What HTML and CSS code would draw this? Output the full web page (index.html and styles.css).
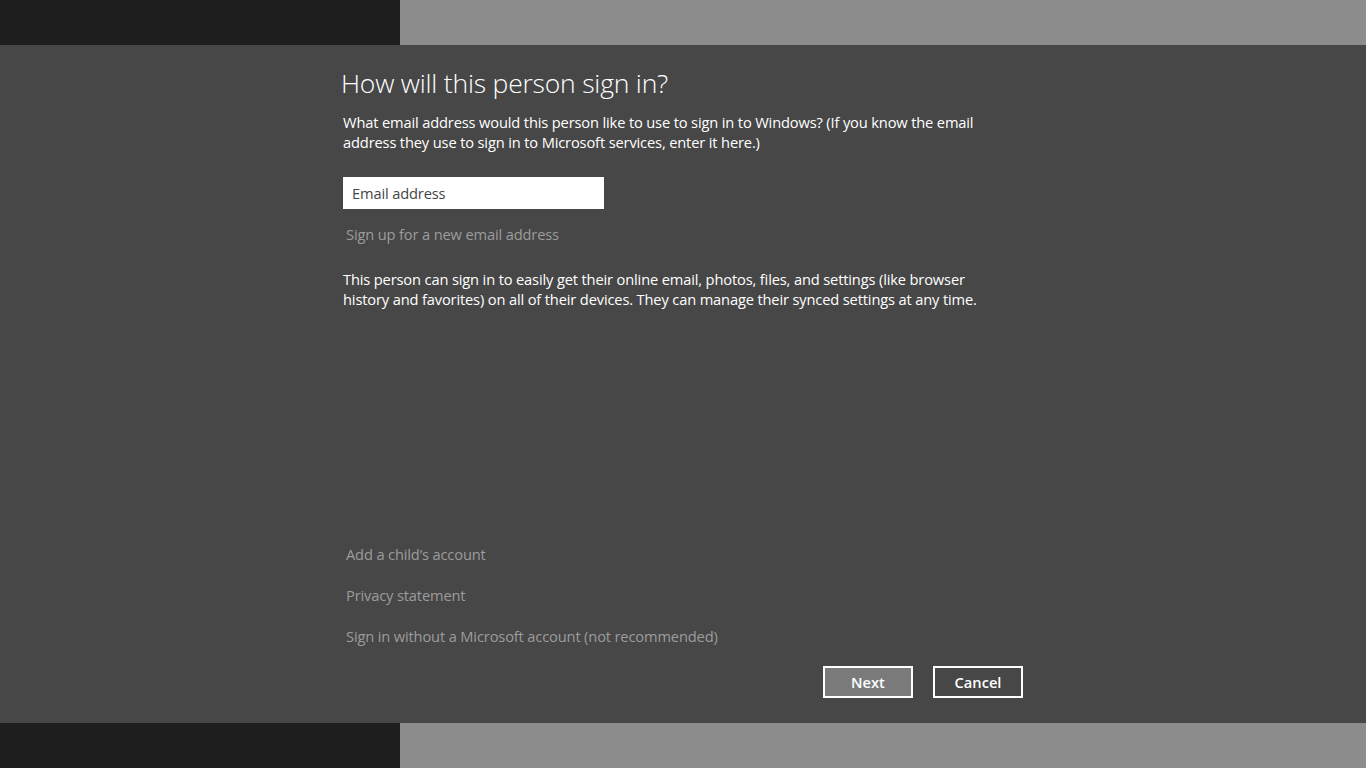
FILE: index.html
```html
<!DOCTYPE html>
<html lang="en">
<head>
<meta charset="utf-8">
<title>How will this person sign in?</title>
<link rel="stylesheet" href="styles.css">
</head>
<body>
<div class="band">
  <div class="band-left"></div>
  <div class="band-right"></div>
</div>
<main class="dialog">
  <h1 class="title">How will this person sign in?</h1>
  <p class="text">What email address would this person like to use to sign in to Windows? (If you know the email<br>address they use to sign in to Microsoft services, enter it here.)</p>
  <input class="email" type="text" placeholder="Email address">
  <a class="link signup">Sign up for a new email address</a>
  <p class="text info">This person can sign in to easily get their online email, photos, files, and settings (like browser<br>history and favorites) on all of their devices. They can manage their synced settings at any time.</p>
  <div class="links">
    <a class="link">Add a child’s account</a>
    <a class="link">Privacy statement</a>
    <a class="link">Sign in without a Microsoft account (not recommended)</a>
  </div>
  <div class="buttons">
    <button class="btn btn-primary">Next</button>
    <button class="btn">Cancel</button>
  </div>
</main>
<div class="band">
  <div class="band-left"></div>
  <div class="band-right"></div>
</div>
</body>
</html>
```
FILE: styles.css
```css
html, body {
  margin: 0;
  padding: 0;
  height: 768px;
  overflow: hidden;
  font-family: "Open Sans", "Noto Sans", sans-serif;
}

.band {
  display: grid;
  grid-template-columns: 400px 1fr;
  height: 45px;
}
.band-left { background: #1e1e1e; }
.band-right { background: #8c8c8c; }

.dialog {
  height: 678px;
  box-sizing: border-box;
  background: #474747;
  padding: 0 343px 25px 341px;
  display: flex;
  flex-direction: column;
  color: #ffffff;
}

.title {
  margin: 20px 0 0 0;
  font-weight: 300;
  font-size: 26.5px;
  line-height: 36px;
  letter-spacing: -0.2px;
}

.text {
  margin: 11px 0 0 2px;
  font-size: 14.67px;
  line-height: 20px;
  letter-spacing: -0.15px;
}

.email {
  margin: 25px 0 0 2px;
  width: 261px;
  height: 32px;
  box-sizing: border-box;
  border: none;
  padding: 0 9px;
  font-family: inherit;
  font-size: 14.67px;
  letter-spacing: -0.15px;
  background: #ffffff;
  color: #333;
  outline: none;
}
.email::placeholder { color: #444; }

.link {
  display: block;
  color: #9c9c9c;
  font-size: 14.67px;
  line-height: 20px;
  letter-spacing: -0.15px;
  margin-left: 5px;
}

.signup { margin-top: 15px; }

.info { margin-top: 25px; }

.links {
  margin-top: auto;
  display: flex;
  flex-direction: column;
  gap: 21px;
}

.buttons {
  margin-top: 20px;
  display: flex;
  justify-content: flex-end;
  gap: 20px;
}

.btn {
  width: 90px;
  height: 32px;
  box-sizing: border-box;
  border: 2px solid #ffffff;
  background: #474747;
  color: #ffffff;
  font-family: inherit;
  font-weight: 600;
  font-size: 14.67px;
  padding: 0;
}
.btn-primary { background: #7a7a7a; }
```
